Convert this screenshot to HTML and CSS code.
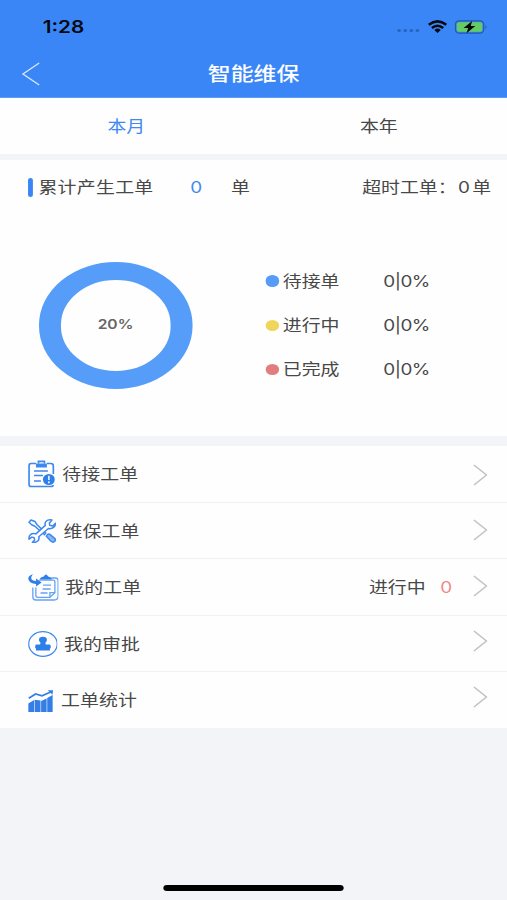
FILE: index.html
```html
<!DOCTYPE html>
<html lang="zh-CN">
<head>
<meta charset="utf-8">
<title>智能维保</title>
<link rel="stylesheet" href="styles.css">
</head>
<body>
<div class="screen">
  <header class="top">
    <div class="status">
      <span class="time">1:28</span>
      <div class="signal"><i></i><i></i><i></i><i></i></div>
      <svg class="wifi" viewBox="0 0 20 13" preserveAspectRatio="none">
        <g fill="none" stroke="#05080d" stroke-width="2.6"><path d="M1 4.7Q10-1.9 19 4.7"/><path d="M4.2 8Q10 3.5 15.8 8"/></g>
        <path fill="#05080d" d="M6.7 9.9Q10 7.3 13.3 9.9L10 13z"/>
      </svg>
      <svg class="battery" viewBox="0 0 33 14" preserveAspectRatio="none">
        <rect x=".8" y=".8" width="28.4" height="12.4" rx="3.6" fill="none" stroke="#245aa9" stroke-width="1.2"/>
        <rect x="2.3" y="2.2" width="25.4" height="9.6" rx="2" fill="#65cb65"/>
        <path d="M31 4.7q2 2.3 0 4.6z" fill="#245aa9"/>
        <path d="M17.6 1 9 8h4.6l-1.600 5.200L20.800 6h-4.600z" fill="#05080d"/>
      </svg>
    </div>
    <div class="nav">
      <svg class="back" viewBox="0 0 18 24" preserveAspectRatio="none"><path d="M17 1 1 12l16 11" fill="none" stroke="#d9e8ff" stroke-width="1.3"/></svg>
      <h1>智能维保</h1>
    </div>
  </header>
  <nav class="tabs"><span class="tab active">本月</span><span class="tab">本年</span></nav>
  <section class="summary">
    <div class="totals">
      <i class="bar"></i><span class="label">累计产生工单</span><span class="count">0</span><span>单</span>
      <span class="overtime">超时工单：<b>0</b>单</span>
    </div>
    <div class="chart">
      <div class="ring">20%</div>
      <div class="legend">
        <div class="item"><i class="dot blue"></i><span>待接单</span><span class="num">0|0%</span></div>
        <div class="item"><i class="dot yellow"></i><span>进行中</span><span class="num">0|0%</span></div>
        <div class="item"><i class="dot red"></i><span>已完成</span><span class="num">0|0%</span></div>
      </div>
    </div>
  </section>
  <main class="menu">
    <div class="row">
      <svg class="icon i1" viewBox="0 0 27 28" preserveAspectRatio="none">
        <g fill="none" stroke="#3e87ee" stroke-width="1.7"><path d="M8 3.5H3Q1 3.5 1 6v18q0 2.5 2 2.5h20q2.300 0 2.300-1.500M19 3.5h4Q25.5 3.5 25.5 6v8"/><path d="M6 11h14M6 15.5h9M6 21h7" stroke-width="1.6"/><path d="M10.500 3.5V1.400h6v2.100"/></g>
        <path d="M8 3.5h11v4H8z" fill="#3e87ee"/><ellipse cx="21" cy="19.500" rx="6" ry="5.500" fill="#2f7fe9"/><path d="M21 15.800v4.200M21 21.300v2" stroke="#fff" stroke-width="1.500"/>
      </svg>
      <span class="name">待接工单</span>
      <svg class="arrow" viewBox="0 0 14 22" preserveAspectRatio="none"><path d="M1 1l12 10L1 21"/></svg>
    </div>
    <div class="row">
      <svg class="icon i2" viewBox="0 0 29 24" preserveAspectRatio="none">
        <g fill="#fff" stroke="#3e87ee" stroke-width="1.5" stroke-linejoin="round">
          <path d="M1 3.2 3 1l4 1.500 2 3 9 8.600-1.400 1.700L7 7.200 4 6z"/>
          <path d="M18.500 17.300q1.200-2.800 3.300-2.200l5.500 4.600q1 2-1 3.200-1.500.6-2.800-.4z" fill="#8bb9f8"/>
          <path d="M27.800 4.300 25 7l-3-.7L21.600 4l2.700-3q-4-.8-6 1.300-1.600 1.600-.8 4.100L8 14.900q-3.500-1-5.600.8-2 2-1.300 4.500l2.700-2.100 2.400.7.500 2.200-2.300 2.300q3.800.5 5.700-1.500 1.500-1.800.8-4.100l9.700-8.200q3.100.6 5.200-1.100 2.100-1.600 2-4.200z"/>
        </g>
      </svg>
      <span class="name">维保工单</span>
      <svg class="arrow" viewBox="0 0 14 22" preserveAspectRatio="none"><path d="M1 1l12 10L1 21"/></svg>
    </div>
    <div class="row">
      <svg class="icon i3" viewBox="0 0 31 27" preserveAspectRatio="none">
        <g fill="none" stroke="#65a2f5" stroke-width="1.3"><path d="M4.800 13.500v9.500q0 3 3 3H26q4 0 4-4V7q0-3-2.700-3H23"/><path d="M7.800 13.500v8q0 1.800 2 1.800h12l5-4.600V7.500q0-1.400-1.700-1.400H11"/><path d="M21.800 23.200v-4.500h5M15 11.200h8M14.500 15h8M12.500 19h7"/></g>
        <path d="M11.700 5.600q.3-2.500 4-3Q17.900-1.400 20 2.600q3.500.5 3.800 3z" fill="#2f7fe9"/>
        <path d="M5 .3Q-.8 2 .5 5.800 2.200 10 8 9.900v2.700l5.600-4.200L8 4.600v2.500Q3.800 6.800 3.200 4.200 3 2 5 .3z" fill="#2f7fe9"/>
      </svg>
      <span class="name">我的工单</span><span class="progress">进行中</span><span class="alert">0</span>
      <svg class="arrow" viewBox="0 0 14 22" preserveAspectRatio="none"><path d="M1 1l12 10L1 21"/></svg>
    </div>
    <div class="row">
      <svg class="icon i4" viewBox="0 0 30 26" preserveAspectRatio="none">
        <ellipse cx="15" cy="13" rx="14.3" ry="12.3" fill="none" stroke="#3e87ee" stroke-width="1.2"/>
        <path d="M11 9q0-3.200 4-3.200T19 9q0 1.300-1.200 2.300-.8 1.500.2 2.200h3.500q1.300 0 1.300 1.500v2.300H7.200V15q0-1.500 1.300-1.500H12q1-.7.200-2.200Q11 10.300 11 9zM8 17.300h14v2.300H8z" fill="#2f7fe9"/>
      </svg>
      <span class="name">我的审批</span>
      <svg class="arrow" viewBox="0 0 14 22" preserveAspectRatio="none"><path d="M1 1l12 10L1 21"/></svg>
    </div>
    <div class="row">
      <svg class="icon i5" viewBox="0 0 26 22" preserveAspectRatio="none">
        <path d="M.3 13.500 6.200 10v12H.3zM6.800 9.700l5.900.8V22H6.800zM13.300 11l5.600-2.500V22h-5.600zM19.500 8l5.500-3v17h-5.500z" fill="#347ee5"/>
        <path d="M.7 8.300 7.700 4l6.500 1.800L23 2" fill="none" stroke="#347ee5" stroke-width="1.700"/><path d="M20 .3h5.500l-.7 4.500z" fill="#347ee5"/>
      </svg>
      <span class="name">工单统计</span>
      <svg class="arrow" viewBox="0 0 14 22" preserveAspectRatio="none"><path d="M1 1l12 10L1 21"/></svg>
    </div>
  </main>
  <footer><i class="home"></i></footer>
</div>
</body>
</html>
```
FILE: styles.css
```css
* { box-sizing: border-box; }
html, body { margin: 0; width: 507px; height: 900px; overflow: hidden; }
.screen {
  width: 416px;
  height: 900px;
  transform: scaleX(1.21875);
  transform-origin: 0 0;
  display: flex;
  flex-direction: column;
  background: #f3f4f8;
  color: #484848;
  font: 15.5px/20px Inter, "Noto Sans CJK SC", sans-serif;
  white-space: nowrap;
}
svg, i { display: block; flex: none; }
.top { height: 98px; background: #3a86f6; border-bottom: 1px solid #5c9df8; }
.status { display: flex; align-items: center; height: 53px; padding-left: 35px; }
.time { width: 291px; font-size: 17px; font-weight: 600; color: #05080d; }
.signal { display: flex; gap: 2.4px; width: 25px; padding-top: 7px; }
.signal i { width: 2.600px; height: 3px; border-radius: 50%; background: #2965bd; }
.wifi { width: 16px; height: 13px; margin-right: 6px; }
.battery { width: 27px; height: 14px; }
.nav { display: flex; align-items: center; height: 42px; padding-left: 18px; }
.back { width: 15px; height: 24px; }
h1 { margin: 2px 0 0 137.500px; font-size: 18.8px; line-height: 24px; font-weight: 500; color: #fff; }
.tabs { display: flex; height: 56px; background: #fefefe; }
.tab { flex: 1; padding-top: 19px; text-align: center; }
.tab.active { color: #4089ef; }
.tab + .tab { padding-right: 1.5px; }
.summary { height: 276px; margin-top: 6px; background: #fefefe; }
.totals { display: flex; align-items: center; height: 54px; padding: 1px 13px 0 22.5px; }
.bar { width: 4px; height: 19px; margin: -1px 5px 0 0; border-radius: 2px; background: #3a86f6; }
.label { width: 124.500px; letter-spacing: .25px; }
.count { width: 33.5px; color: #4089ef; }
.overtime { margin-left: auto; }
.overtime b { font-weight: 400; margin: 0 2px 0 1px; }
.chart { display: flex; padding: 48px 0 0 31.5px; }
.ring {
  display: flex; align-items: center; justify-content: center;
  width: 126.5px; height: 126.5px; border: 18.8px solid #569df9; border-radius: 50%;
  font-size: 12.800px; font-weight: 600; color: #666;
}
.legend { margin: -3px 0 0 59.5px; }
.item { display: flex; align-items: center; height: 44.3px; padding-top: 1px; }
.dot { width: 11.5px; height: 11.5px; margin: -1px 3px 0 0; border-radius: 50%; }
.blue { background: #559cf8; }
.yellow { background: #efd55c; }
.red { background: #e17d7d; }
.num { margin-left: 36px; letter-spacing: -.45px; }
.menu { height: 282px; margin-top: 10px; background: #fefefe; }
.row { display: flex; align-items: center; height: 56.5px; padding: 1px 16px 0 22.500px; border-bottom: 1px solid #f1f2f5; }
.row:last-child { height: 56px; border: 0; }
.name, .progress, .alert { padding-top: 2px; }
.row:last-child .name { padding-top: 1px; }
.name { letter-spacing: .1px; }
.i1 { width: 22px; height: 28px; margin-right: 6.500px; }
.i2 { width: 23.5px; height: 24px; margin-right: 6px; }
.i3 { width: 25.500px; height: 27px; margin-right: 5.500px; }
.i4 { width: 24.500px; height: 26px; margin-right: 5.500px; }
.i5 { width: 21px; height: 22px; margin: 0 6px 0 .5px; }
.arrow { width: 12px; height: 22px; margin-left: auto; }
.arrow path { fill: none; stroke: #c2c2c2; stroke-width: 1.5; }
.row:first-child .arrow { margin-top: 1px; }
.row:nth-child(2) .arrow { margin-bottom: 1px; }
.row:nth-child(3) .arrow { margin-bottom: 3px; margin-left: 17px; }
.row:nth-child(4) .arrow { margin-bottom: 6px; }
.row:nth-child(5) .arrow { margin-bottom: 8px; }
.progress { margin-left: auto; }
.alert { margin-left: 12px; color: #ee8b86; }
footer { display: flex; justify-content: center; margin-top: auto; padding-bottom: 9px; }
.home { width: 148px; height: 6px; border-radius: 3px; background: #000; }
```
